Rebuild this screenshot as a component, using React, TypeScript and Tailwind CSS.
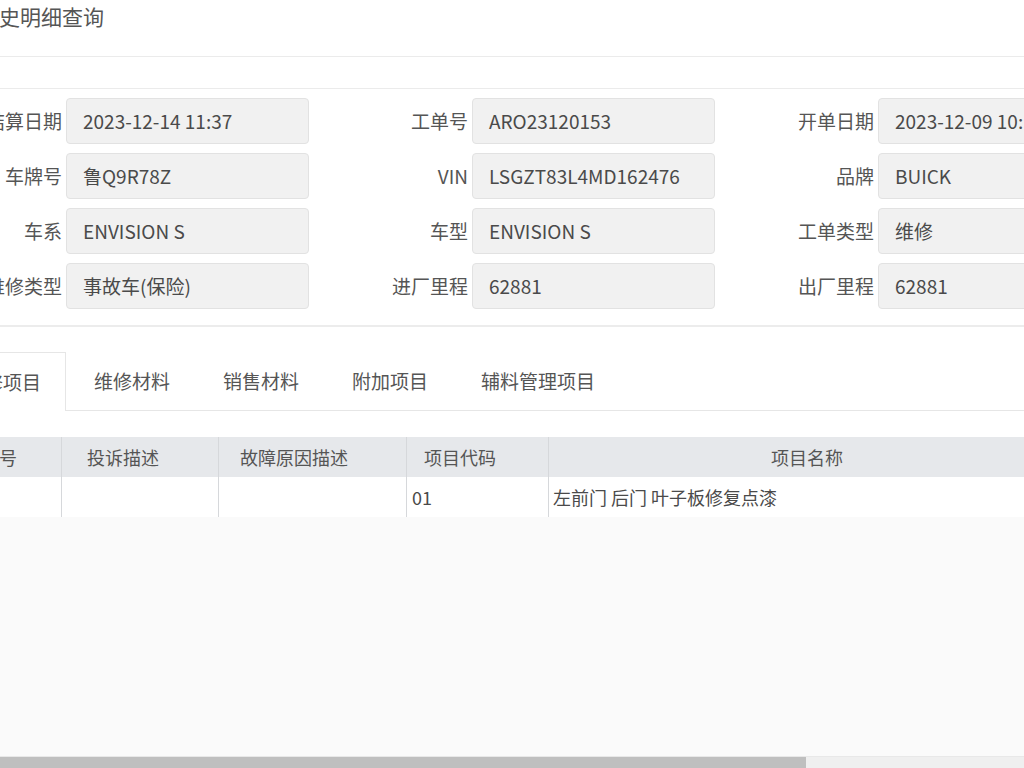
import React from "react";

type Field = { label: string; value: string };

const rows: Field[][] = [
  [
    { label: "结算日期", value: "2023-12-14 11:37" },
    { label: "工单号", value: "ARO23120153" },
    { label: "开单日期", value: "2023-12-09 10:12" },
  ],
  [
    { label: "车牌号", value: "鲁Q9R78Z" },
    { label: "VIN", value: "LSGZT83L4MD162476" },
    { label: "品牌", value: "BUICK" },
  ],
  [
    { label: "车系", value: "ENVISION S" },
    { label: "车型", value: "ENVISION S" },
    { label: "工单类型", value: "维修" },
  ],
  [
    { label: "维修类型", value: "事故车(保险)" },
    { label: "进厂里程", value: "62881" },
    { label: "出厂里程", value: "62881" },
  ],
];

const tabs = ["维修项目", "维修材料", "销售材料", "附加项目", "辅料管理项目"];

function FormField({ field, first }: { field: Field; first: boolean }) {
  return (
    <div className="flex shrink-0 items-center">
      <div
        className={`flex shrink-0 justify-end whitespace-nowrap pr-1 text-[19px] text-[#555] ${
          first ? "w-[66px]" : "w-[163px]"
        }`}
      >
        {field.label}
      </div>
      <div className="flex h-[46px] w-[243px] shrink-0 items-center overflow-hidden whitespace-nowrap rounded-[4px] border border-[#e2e2e2] bg-[#f1f1f1] pl-4 text-[19px] text-[#4a4a4a]">
        {field.value}
      </div>
    </div>
  );
}

export default function App() {
  return (
    <div
      className="flex h-[768px] w-[1024px] flex-col overflow-hidden bg-white"
      style={{ fontFamily: '"Noto Sans CJK SC", "Noto Sans", sans-serif' }}
    >
      {/* 标题 */}
      <div className="h-[57px] shrink-0 border-b border-[#ebebeb]">
        <div className="-ml-[22px] whitespace-nowrap pt-[1px] text-[21px] leading-[30px] text-[#555]">
          历史明细查询
        </div>
      </div>
      <div className="h-[32px] shrink-0 border-b border-[#ebebeb]" />

      {/* 基本信息 */}
      <div className="flex shrink-0 flex-col gap-[9px] border-b-2 border-[#ececec] pb-[16px] pt-[9px]">
        {rows.map((row, i) => (
          <div key={i} className="flex">
            {row.map((f, j) => (
              <FormField key={f.label} field={f} first={j === 0} />
            ))}
          </div>
        ))}
      </div>

      {/* 页签 */}
      <div className="mt-[25px] flex h-[59px] shrink-0 border-b border-[#e6e6e6]">
        <div className="-ml-[64px] flex">
          {tabs.map((t, i) => (
            <div
              key={t}
              className={`-mb-px flex items-center whitespace-nowrap pl-[28px] text-[19px] text-[#555] ${
                i === 0
                  ? "border border-b-0 border-[#e6e6e6] bg-white pr-[24px]"
                  : "pr-[25px]"
              }`}
            >
              {t}
            </div>
          ))}
        </div>
      </div>

      {/* 表格 */}
      <div className="mt-[26px] flex shrink-0 flex-col bg-white">
        <div className="-ml-[40px] flex h-[40px] bg-[#e6e8eb] text-[18px] text-[#555]">
          <div className="flex w-[102px] shrink-0 items-center whitespace-nowrap border-r border-[#d6d8db] pl-[21px]">
            序号
          </div>
          <div className="flex w-[157px] shrink-0 items-center whitespace-nowrap border-r border-[#d6d8db] pl-[25px]">
            投诉描述
          </div>
          <div className="flex w-[188px] shrink-0 items-center whitespace-nowrap border-r border-[#d6d8db] pl-[21px]">
            故障原因描述
          </div>
          <div className="flex w-[142px] shrink-0 items-center whitespace-nowrap border-r border-[#d6d8db] pl-[17px]">
            项目代码
          </div>
          <div className="flex w-[516px] shrink-0 items-center justify-center whitespace-nowrap">
            项目名称
          </div>
        </div>
        <div className="-ml-[40px] flex h-[40px] bg-white text-[18px] text-[#4a4a4a]">
          <div className="w-[102px] shrink-0 border-r border-[#d6d8db]" />
          <div className="w-[157px] shrink-0 border-r border-[#d6d8db]" />
          <div className="w-[188px] shrink-0 border-r border-[#d6d8db]" />
          <div className="flex w-[142px] shrink-0 items-center border-r border-[#d6d8db] pl-[5px]">
            01
          </div>
          <div className="flex w-[516px] shrink-0 items-center whitespace-nowrap pl-[4px]">
            左前门 后门 叶子板修复点漆
          </div>
        </div>
      </div>

      <div className="flex-1 bg-[#fafafa]" />

      {/* 滚动条 */}
      <div className="flex h-[12px] shrink-0 border-t border-[#e8e8e8]">
        <div className="w-[806px] bg-[#bfbfbf]" />
        <div className="flex-1 bg-[#efefef]" />
      </div>
    </div>
  );
}
